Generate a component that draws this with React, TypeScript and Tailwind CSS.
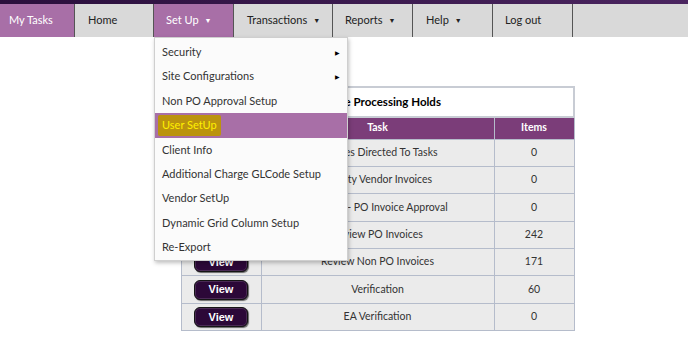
const navItems = [
  { label: "My Tasks", w: "w-[75px]", pl: "pl-[9px]", active: true, caret: false },
  { label: "Home", w: "w-[79px]", pl: "pl-[13px]", active: false, caret: false },
  { label: "Set Up", w: "w-[80px]", pl: "pl-[12px]", active: true, caret: true },
  { label: "Transactions", w: "w-[99px]", pl: "pl-[13px]", active: false, caret: true },
  { label: "Reports", w: "w-[80px]", pl: "pl-[12px]", active: false, caret: true },
  { label: "Help", w: "w-[80px]", pl: "pl-[13px]", active: false, caret: true },
  { label: "Log out", w: "w-[80px]", pl: "pl-[12px]", active: false, caret: false },
];

const menuItems = [
  { label: "Security", sub: true },
  { label: "Site Configurations", sub: true },
  { label: "Non PO Approval Setup" },
  { label: "User SetUp", selected: true },
  { label: "Client Info" },
  { label: "Additional Charge GLCode Setup" },
  { label: "Vendor SetUp" },
  { label: "Dynamic Grid Column Setup" },
  { label: "Re-Export" },
];

const rows = [
  { task: "Invoices Directed To Tasks", items: 0 },
  { task: "Priority Vendor Invoices", items: 0 },
  { task: "Pending - PO Invoice Approval", items: 0 },
  { task: "Review PO Invoices", items: 242 },
  { task: "Review Non PO Invoices", items: 171 },
  { task: "Verification", items: 60 },
  { task: "EA Verification", items: 0 },
];

function Caret() {
  return <span className="ml-[6px] text-[7px] align-middle">▼</span>;
}

export default function App() {
  return (
    <div className="relative w-[688px] h-[340px] bg-white overflow-hidden font-['Lato','Open_Sans',sans-serif] text-[#333]">
      <div className="h-[4px] bg-gradient-to-r from-[#2a0f3c] to-[#4b2560]" />

      {/* main nav */}
      <nav className="flex h-[33px] bg-[#d9d9d9] w-full">
        {navItems.map((n) => (
          <div
            key={n.label}
            className={`${n.w} ${n.pl} flex items-center text-[11px] border-r border-[#555] ${
              n.active ? "bg-[#a86fa7] text-white" : "bg-[#d9d9d9] text-[#222]"
            }`}
          >
            {n.label}
            {n.caret && <Caret />}
          </div>
        ))}
      </nav>

      {/* holds table */}
      <div className="ml-[180px] mt-[49px] w-[395px]">
        <table className="w-full border-collapse text-[10.5px]">
          <thead>
            <tr>
              <th
                colSpan={3}
                className="h-[30px] border-2 border-[#c8ccd4] bg-white text-[11.5px] font-bold text-black"
              >
                Invoice Processing Holds
              </th>
            </tr>
            <tr className="bg-[#7b3d79] text-white">
              <th className="w-[80px] h-[22px] border border-[#b5bccb]" />
              <th className="border border-[#b5bccb] font-bold">Task</th>
              <th className="w-[80px] border border-[#b5bccb] font-bold">Items</th>
            </tr>
          </thead>
          <tbody>
            {rows.map((r) => (
              <tr key={r.task} className="bg-[#ebebeb] h-[27.4px]">
                <td className="border border-[#b5bccb] text-center">
                  <button className="w-[54px] h-[20px] rounded-[6px] bg-[#2c0838] border border-[#151515] shadow-[inset_0_0_0_1px_#4a2a55,1px_1px_1px_#666] text-white font-bold text-[11px] font-['Liberation_Sans',Arial,sans-serif] leading-none">
                    View
                  </button>
                </td>
                <td className="border border-[#b5bccb] text-center">{r.task}</td>
                <td className="border border-[#b5bccb] text-center">{r.items}</td>
              </tr>
            ))}
          </tbody>
        </table>
      </div>

      {/* Set Up dropdown */}
      <div className="absolute left-[154px] top-[37px] w-[194px] pt-[2px] bg-[#fbfbfb] border border-[#cfcfcf] shadow-[1px_2px_4px_rgba(0,0,0,0.25)]">
        {menuItems.map((m) => (
          <div
            key={m.label}
            className={`relative flex items-center h-[24.4px] text-[11px] ${
              m.selected ? "bg-[#a86fa7] pl-[3px]" : "pl-[7px]"
            }`}
          >
            {m.selected ? (
              <span className="bg-[#bb930e] text-[#fff000] px-[4px] py-[2px] rounded-[2px]">
                {m.label}
              </span>
            ) : (
              m.label
            )}
            {m.sub && (
              <span className="absolute right-[7px] text-[6px] text-black">▶</span>
            )}
          </div>
        ))}
      </div>
    </div>
  );
}
